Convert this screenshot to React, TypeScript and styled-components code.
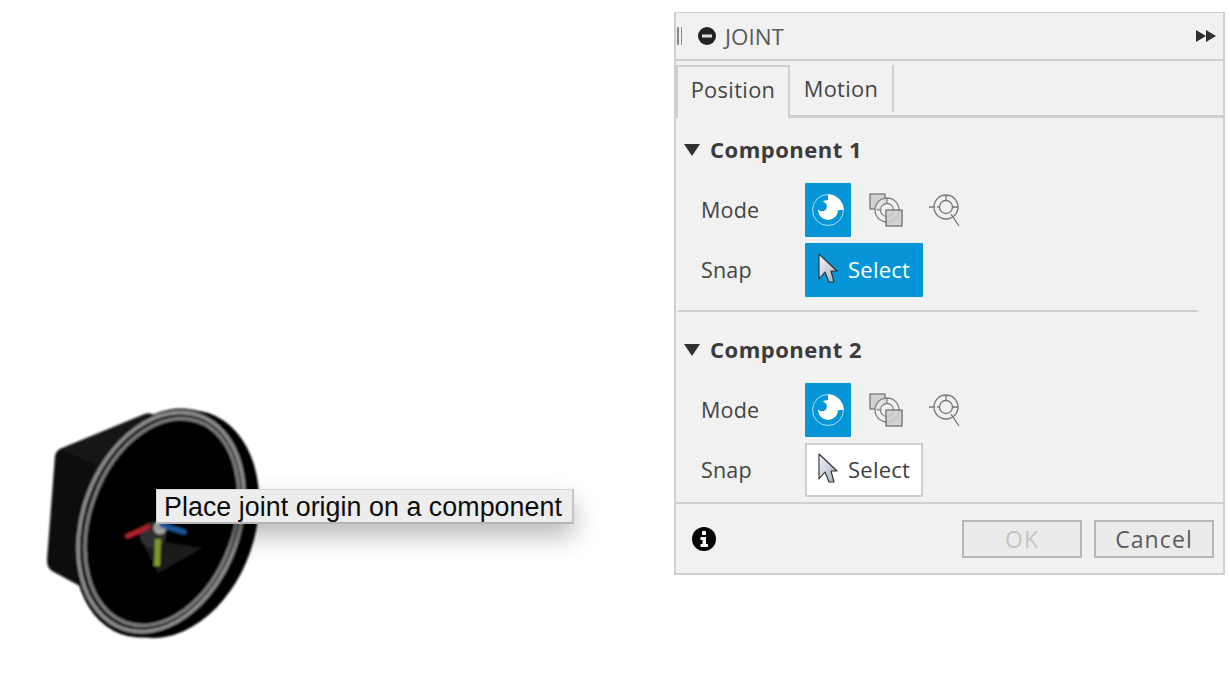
import { createGlobalStyle, styled } from "styled-components";

const GlobalStyle = createGlobalStyle`
  html, body {
    margin: 0;
    padding: 0;
    background: #fff;
  }
`;

const Page = styled.div`
  width: 1230px;
  height: 686px;
  display: flex;
  overflow: hidden;
  font-family: "Open Sans", "Noto Sans", sans-serif;
`;

const Viewport = styled.div`
  position: relative;
  width: 674px;
  flex: none;
`;

const ModelSvg = styled.svg`
  position: absolute;
  left: 0;
  top: 0;
`;

const Tip = styled.div`
  position: absolute;
  left: 156px;
  top: 489px;
  width: 418px;
  height: 35px;
  box-sizing: border-box;
  padding: 2px 0 0 7px;
  display: flex;
  align-items: center;
  background: #ededed;
  border: 1px solid #d6d6d6;
  border-bottom: 2px solid #b5b5b5;
  border-right: 2px solid #c4c4c4;
  box-shadow: 0 12px 26px rgba(0, 0, 0, 0.28);
  color: #0c0c0c;
  font-family: "Liberation Sans", Arial, sans-serif;
  font-size: 26.8px;
  letter-spacing: 0.05px;
  white-space: nowrap;
`;

const Panel = styled.div`
  margin-top: 12px;
  width: 551px;
  height: 563px;
  box-sizing: border-box;
  display: flex;
  flex-direction: column;
  background: #f1f1f1;
  border: 2px solid #cfcfcf;
  border-top-width: 1px;
  color: #3f3f3f;
`;

const TitleBar = styled.div`
  height: 48px;
  flex: none;
  box-sizing: border-box;
  display: flex;
  align-items: center;
  padding: 0 7px 0 1px;
  border-bottom: 2px solid #cfcfcf;
  color: #5a5a5a;
  font-size: 22.4px;
`;

const Grip = styled.div`
  width: 5px;
  height: 18px;
  margin-right: 16px;
  border-left: 2px solid #8a8a8a;
  border-right: 1px solid #8a8a8a;
  box-sizing: border-box;
`;

const TitleText = styled.span`
  margin-left: 9px;
  flex: 1;
`;

const TabRow = styled.div`
  height: 50px;
  margin-top: 4px;
  flex: none;
  display: flex;
  align-items: flex-start;
  border-bottom: 3px solid #cfcfcf;
`;

const Tab = styled.div<{ $active?: boolean }>`
  box-sizing: border-box;
  height: ${({ $active }) => ($active ? "53px" : "47px")};
  line-height: ${({ $active }) => ($active ? "45px" : "47px")};
  text-align: center;
  font-size: 21.8px;
  letter-spacing: 0.35px;
  color: #444;
  width: ${({ $active }) => ($active ? "114px" : "104px")};
  background: #f1f1f1;
  ${({ $active }) =>
    $active
      ? "border: 2px solid #cfcfcf; border-bottom: none; position: relative; z-index: 1;"
      : "border-right: 2px solid #cfcfcf;"}
`;

const Body = styled.div`
  flex: 1;
  display: flex;
  flex-direction: column;
  min-height: 0;
`;

const Section = styled.section<{ $top: number }>`
  padding: ${({ $top }) => $top}px 0 0 8px;
`;

const SectionHead = styled.div`
  display: flex;
  align-items: center;
  gap: 10px;
  height: 32px;
  box-sizing: border-box;
  padding-bottom: 2px;
  font-size: 22px;
  font-weight: 700;
  letter-spacing: 0.5px;
  color: #3b3b3b;
`;

const Caret = styled.div`
  width: 0;
  height: 0;
  margin-top: 2px;
  border-left: 8.5px solid transparent;
  border-right: 8.5px solid transparent;
  border-top: 12px solid #2f2f2f;
`;

const Rows = styled.div`
  display: flex;
  flex-direction: column;
  gap: 6px;
  margin-top: 17px;
`;

const Row = styled.div`
  display: flex;
  align-items: center;
  height: 54px;
`;

const RowLabel = styled.div`
  width: 121px;
  padding: 0 0 2px 17px;
  box-sizing: border-box;
  font-size: 21.5px;
  letter-spacing: 0.2px;
  color: #444;
`;

const ModeButton = styled.div<{ $active?: boolean }>`
  width: 46px;
  height: 54px;
  margin-right: 12px;
  display: flex;
  align-items: center;
  justify-content: center;
  border-radius: 1px;
  background: ${({ $active }) => ($active ? "#0696d7" : "transparent")};
`;

const SelectButton = styled.div<{ $active?: boolean }>`
  width: 118px;
  height: 54px;
  box-sizing: border-box;
  display: flex;
  align-items: center;
  gap: 10px;
  padding: 0 0 2px 11px;
  border-radius: 1px;
  font-size: 22px;
  letter-spacing: 0.25px;
  color: ${({ $active }) => ($active ? "#fff" : "#3f3f3f")};
  background: ${({ $active }) => ($active ? "#0696d7" : "#fff")};
  border: 2px solid ${({ $active }) => ($active ? "#0696d7" : "#cfcfcf")};
`;

const Divider = styled.div`
  height: 2px;
  margin: 13px 25px 0 2px;
  background: #cfcfcf;
  flex: none;
`;

const Footer = styled.div`
  margin-top: auto;
  height: 71px;
  flex: none;
  box-sizing: border-box;
  display: flex;
  align-items: center;
  gap: 12px;
  padding: 0 9px 0 16px;
  border-top: 2px solid #cfcfcf;
`;

const FooterButton = styled.div<{ $disabled?: boolean }>`
  width: 120px;
  height: 38px;
  box-sizing: border-box;
  display: flex;
  align-items: center;
  justify-content: center;
  background: #ebebeb;
  border: 2px solid #b8b8b8;
  font-size: 23px;
  letter-spacing: 1.1px;
  color: ${({ $disabled }) => ($disabled ? "#c4c4c4" : "#5c5c5c")};
`;

const InfoSlot = styled.div`
  flex: 1;
  display: flex;
  align-items: center;
`;

const ModelIllustration = () => (
  <ModelSvg width="674" height="686" viewBox="0 0 674 686">
    <defs>
      <filter id="soft" x="-10%" y="-10%" width="120%" height="120%">
        <feGaussianBlur stdDeviation="0.8" />
      </filter>
    </defs>
    <g filter="url(#soft)">
      <path d="M60 449 L145 414 Q152 412 158 418 L170 470 L100 600 L78 585 L52 571 Q47 568 47 560 L55 456 Q56 451 60 449 Z" fill="#0d0d0d" />
      <path d="M60 449 L145 414 Q152 412 158 418 L120 475 Z" fill="#151515" />
      <ellipse cx="171" cy="524" rx="84" ry="117" transform="rotate(19 171 524)" fill="#050505" />
      <ellipse cx="161" cy="523" rx="82" ry="118" transform="rotate(20 161 523)" fill="#000" />
      <ellipse cx="161" cy="522" rx="78" ry="113" transform="rotate(20 161 522)" fill="none" stroke="#8c8c8c" strokeWidth="3.8" />
      <ellipse cx="162" cy="522" rx="72" ry="107" transform="rotate(20 162 522)" fill="none" stroke="#7c7c7c" strokeWidth="3.4" />
      <path d="M140 538 L203 548 L158 573 Z" fill="#1b1b1b" />
      <circle cx="153" cy="535" r="13" fill="#303030" />
      <circle cx="160" cy="528" r="6.5" fill="#b5b5b5" />
      <path d="M128 536 L148 527" stroke="#b3242a" strokeWidth="5" strokeLinecap="round" />
      <path d="M162 525 L184 532" stroke="#1e68b8" strokeWidth="5" strokeLinecap="round" />
      <path d="M158 539 L157 566" stroke="#7d9e2c" strokeWidth="6" />
    </g>
  </ModelSvg>
);

const StopIcon = () => (
  <svg width="18" height="18" viewBox="0 0 18 18">
    <circle cx="9" cy="9" r="9" fill="#222" />
    <rect x="4" y="7.5" width="10" height="3" fill="#ddd" />
  </svg>
);

const ForwardIcon = () => (
  <svg width="20" height="12" viewBox="0 0 20 12">
    <path d="M0 0 L10 6 L0 12 Z M10 0 L20 6 L10 12 Z" fill="#2e2e2e" />
  </svg>
);

const InfoIcon = () => (
  <svg width="24" height="24" viewBox="0 0 24 24">
    <circle cx="12" cy="12" r="12" fill="#000" />
    <rect x="10" y="4" width="4" height="4" fill="#fff" />
    <path d="M8.5 10 H14 V17 H16 V20 H8.5 V17 H10.5 V13 H8.5 Z" fill="#fff" />
  </svg>
);

const OriginIcon = () => (
  <svg width="36" height="36" viewBox="0 0 36 36">
    <circle cx="18" cy="18" r="15.5" fill="none" stroke="#a5dcf3" strokeWidth="1" />
    <path d="M18 18 V2.5 A15.5 15.5 0 0 1 33.5 18 Z" fill="#fff" />
    <circle cx="18" cy="18" r="10" fill="#fff" />
    <circle cx="12" cy="14.5" r="4.8" fill="#0696d7" />
  </svg>
);

const PlanesIcon = () => (
  <svg width="36" height="36" viewBox="0 0 36 36">
    <rect x="2" y="2" width="15" height="15" fill="#d2d2d2" stroke="#777" strokeWidth="1.3" />
    <circle cx="19" cy="18" r="12" fill="rgba(241,241,241,0.65)" stroke="#858585" strokeWidth="1.3" />
    <circle cx="19" cy="18" r="6.5" fill="#f1f1f1" stroke="#858585" strokeWidth="1.3" />
    <path d="M9 18 H12 M19 6 V11" fill="none" stroke="#777" strokeWidth="1.2" />
    <rect x="18" y="18" width="16" height="16" fill="rgba(205,205,205,0.85)" stroke="#707070" strokeWidth="1.3" />
  </svg>
);

const ProbeIcon = () => (
  <svg width="36" height="36" viewBox="0 0 36 36">
    <circle cx="20" cy="15" r="12" fill="none" stroke="#777" strokeWidth="1.3" />
    <circle cx="20" cy="15" r="6.5" fill="none" stroke="#777" strokeWidth="1.3" />
    <path d="M3 15 H9 M11 15 H14 M20 3 V8 M27 15 H32 M25 22 L33 34" fill="none" stroke="#777" strokeWidth="1.3" />
  </svg>
);

const CursorIcon = () => (
  <svg width="20" height="32" viewBox="0 0 20 32">
    <defs>
      <linearGradient id="cursorFill" x1="0" y1="0" x2="1" y2="1">
        <stop offset="0" stopColor="#f6f8fb" />
        <stop offset="1" stopColor="#a3adbe" />
      </linearGradient>
    </defs>
    <path d="M1 1 L19 18 L13 18 L16 29 L11 29 L7 19 L1 26 Z" fill="url(#cursorFill)" stroke="#2c2c2c" strokeWidth="1.1" strokeLinejoin="round" />
  </svg>
);

const ComponentSection = ({ title, top, active }: { title: string; top: number; active?: boolean }) => (
  <Section $top={top}>
    <SectionHead>
      <Caret />
      {title}
    </SectionHead>
    <Rows>
      <Row>
        <RowLabel>Mode</RowLabel>
        <ModeButton $active>
          <OriginIcon />
        </ModeButton>
        <ModeButton>
          <PlanesIcon />
        </ModeButton>
        <ModeButton>
          <ProbeIcon />
        </ModeButton>
      </Row>
      <Row>
        <RowLabel>Snap</RowLabel>
        <SelectButton $active={active}>
          <CursorIcon />
          Select
        </SelectButton>
      </Row>
    </Rows>
  </Section>
);

export default function App() {
  return (
    <Page>
      <GlobalStyle />
      <Viewport>
        <ModelIllustration />
        <Tip>Place joint origin on a component</Tip>
      </Viewport>
      <Panel>
        <TitleBar>
          <Grip />
          <StopIcon />
          <TitleText>JOINT</TitleText>
          <ForwardIcon />
        </TitleBar>
        <TabRow>
          <Tab $active>Position</Tab>
          <Tab>Motion</Tab>
        </TabRow>
        <Body>
          <ComponentSection title="Component 1" top={16} active />
          <Divider />
          <ComponentSection title="Component 2" top={22} />
        </Body>
        <Footer>
          <InfoSlot>
            <InfoIcon />
          </InfoSlot>
          <FooterButton $disabled>OK</FooterButton>
          <FooterButton>Cancel</FooterButton>
        </Footer>
      </Panel>
    </Page>
  );
}
